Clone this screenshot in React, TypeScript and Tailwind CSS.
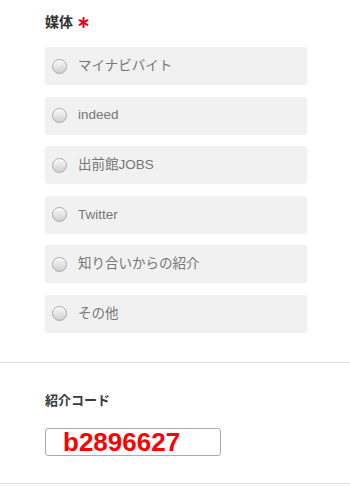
const options = ['マイナビバイト', 'indeed', '出前館JOBS', 'Twitter', '知り合いからの紹介', 'その他'];

function Radio() {
  return (
    <span className="w-[15px] h-[15px] rounded-full border border-[#a9a9a9] bg-gradient-to-b from-[#fafafa] to-[#cfcfcf] shadow-[inset_0_1px_1px_rgba(255,255,255,0.9)] shrink-0" />
  );
}

function RequiredMark() {
  return (
    <svg width="11" height="11" viewBox="0 0 12 12" className="ml-[5px]" aria-hidden>
      <g stroke="#e60012" strokeWidth="2.2" strokeLinecap="round">
        <line x1="6" y1="1" x2="6" y2="11" />
        <line x1="1.7" y1="3.5" x2="10.3" y2="8.5" />
        <line x1="1.7" y1="8.5" x2="10.3" y2="3.5" />
      </g>
    </svg>
  );
}

export default function App() {
  return (
    <div className="w-[350px] h-[492px] bg-white overflow-hidden font-['Liberation_Sans','Noto_Sans_CJK_JP',sans-serif]">
      {/* 媒体 */}
      <section className="pl-[45px] pr-[43px] pt-[13px] pb-[29px] border-b border-[#e3e3e3]">
        <div className="flex items-center h-[18px] text-[14px] font-bold text-[#333]">
          <span>媒体</span>
          <RequiredMark />
        </div>
        <div className="mt-[16px] flex flex-col gap-[11.6px]">
          {options.map((label) => (
            <label
              key={label}
              className="h-[38px] rounded-[4px] bg-[#f1f1f1] shadow-[0_0_1px_rgba(0,0,0,0.08)] flex items-center pl-[7px] gap-[11px] text-[13.5px] text-[#777]"
            >
              <Radio />
              <span>{label}</span>
            </label>
          ))}
        </div>
      </section>

      {/* 紹介コード */}
      <section className="pl-[45px] pt-[30px] pb-[27px] border-b border-[#e3e3e3]">
        <div className="h-[16px] flex items-center text-[13px] font-bold text-[#3a3a3a]">紹介コード</div>
        <div className="mt-[19px] w-[176px] h-[28px] rounded-[3px] border border-[#aaa] bg-white flex items-center pl-[17px]">
          <span className="text-[26px] leading-none font-bold text-[#ff0000] [text-shadow:0_0_2px_#fff,1px_1px_0_#fff,-1px_-1px_0_#fff]">
            b2896627
          </span>
        </div>
      </section>
    </div>
  );
}
